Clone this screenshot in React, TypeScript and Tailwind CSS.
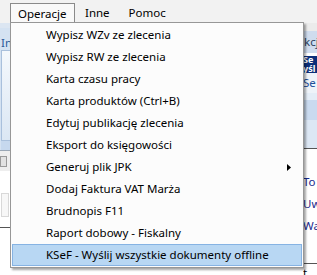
import React from "react";

const items = [
  "Wypisz WZv ze zlecenia",
  "Wypisz RW ze zlecenia",
  "Karta czasu pracy",
  "Karta produktów (Ctrl+B)",
  "Edytuj publikację zlecenia",
  "Eksport do księgowości",
  "Generuj plik JPK",
  "Dodaj Faktura VAT Marża",
  "Brudnopis F11",
  "Raport dobowy - Fiskalny",
  "KSeF - Wyślij wszystkie dokumenty offline",
];

export default function App() {
  return (
    <div className="relative w-[317px] h-[275px] overflow-hidden bg-[#f0f0f0] font-['Noto_Sans',sans-serif] text-[11.5px] text-black">
      {/* menu bar */}
      <div className="flex h-[23px] items-end bg-[#f2f2f2] pl-[10px]">
        <div className="flex h-[20px] w-[65px] items-center border border-b-0 border-[#8a8a8a] bg-[#f9f9f9] pl-[7px]">
          Operacje
        </div>
        <div className="flex h-[20px] items-center pl-[10px]">Inne</div>
        <div className="flex h-[20px] items-center pl-[19px]">Pomoc</div>
      </div>

      {/* background content */}
      <div className="flex h-[252px] flex-col">
        <div className="flex flex-1">
          {/* left strip */}
          <div className="flex w-[10px] flex-col">
            <div className="h-[5px] bg-[#dce6f2]" />
            <div className="flex h-[122px] flex-col bg-[#d4e2f2] pl-[1px]">
              <div className="h-[22px] overflow-hidden whitespace-nowrap pt-[6px] text-[#2a5a99]">Informacje</div>
              <div className="flex-1 border border-r-0 border-[#a9c0dc] bg-gradient-to-b from-[#f4f8fc] to-[#dbe7f4]" />
              <div className="h-[9px] bg-[#c6d8ee]" />
            </div>
            <div className="h-[1px] bg-[#9aa7b5]" />
            <div className="flex h-[20px] items-center bg-[#eeeeee]">
              <div className="h-[11px] w-[7px] border border-[#9a9a9a] bg-[#e2e2e2]" />
            </div>
            <div className="h-[56px] bg-white pl-[1px] pt-[22px]">
              <div className="h-[24px] w-[8px] border border-[#d8d8d8] bg-[#f7f7f7]" />
            </div>
            <div className="h-[1px] bg-[#555]" />
            <div className="flex-1 bg-white" />
          </div>
          <div className="flex-1 bg-white" />
          {/* right strip */}
          <div className="flex w-[14px] flex-col overflow-hidden whitespace-nowrap">
            <div className="h-[8px] bg-[#ebebeb]" />
            <div className="flex h-[22px] items-center bg-[#cfdcee] pl-[1px] text-[#2b3f5c]">kcja</div>
            <div className="h-[3px] bg-white" />
            <div className="h-[8px] overflow-hidden bg-[#0c2f7a] text-[9px] font-bold leading-[8px] text-white">Se</div>
            <div className="h-[9px] overflow-hidden bg-[#0c2f7a] text-[9px] font-bold leading-[9px] text-white">yśl</div>
            <div className="flex h-[20px] items-center bg-[#eef3f9] text-[#1e4f9a]">Se</div>
            <div className="h-[7px] bg-[#e4edf7]" />
            <div className="h-[20px] bg-[#c9daef]" />
            <div className="h-[28px] bg-[#dce7f4]" />
            <div className="h-[1px] bg-[#555]" />
            <div className="h-[22px] bg-white" />
            <div className="flex h-[22px] items-center bg-white text-[#1a2a8c]">To</div>
            <div className="flex h-[22px] items-center bg-white text-[#1a2a8c]">Uw</div>
            <div className="flex h-[22px] items-center bg-white text-[#1a2a8c]">Wa</div>
            <div className="h-[26px] bg-white" />
            <div className="h-[1px] bg-[#555]" />
            <div className="flex flex-1 items-center bg-white">t</div>
          </div>
        </div>
        {/* selected grid row */}
        <div className="flex h-[9px] overflow-hidden whitespace-nowrap bg-[#1f6fd0] leading-[12px] text-white">
          <div className="w-[75px] border-r border-white" />
          <div className="w-[98px] border-r border-white pl-[19px]">11/AT/03/2026</div>
          <div className="w-[102px] border-r border-white pl-[6px]">2026-03-18</div>
          <div className="flex-1 pl-[2px]">AcomNP</div>
        </div>
      </div>

      {/* dropdown menu */}
      <div className="absolute left-[10px] top-[22px] w-[294px] border border-[#979797] bg-[#fcfcfc] p-[1px] shadow-[2px_2px_2px_rgba(0,0,0,0.35)]">
        {items.map((t, i) => {
          const last = i === items.length - 1;
          return (
            <div
              key={t}
              className={
                last
                  ? "relative flex h-[22px] items-center whitespace-nowrap border border-[#86b3e3] bg-[#b8d7f3] pl-[33px]"
                  : "relative flex h-[22px] items-center whitespace-nowrap border border-transparent pl-[33px]"
              }
            >
              {t}
              {t === "Generuj plik JPK" && (
                <svg className="absolute right-[10px] top-[7px]" width="4" height="7" viewBox="0 0 4 7">
                  <path d="M0 0 L4 3.5 L0 7 Z" fill="#000" />
                </svg>
              )}
            </div>
          );
        })}
      </div>
    </div>
  );
}
